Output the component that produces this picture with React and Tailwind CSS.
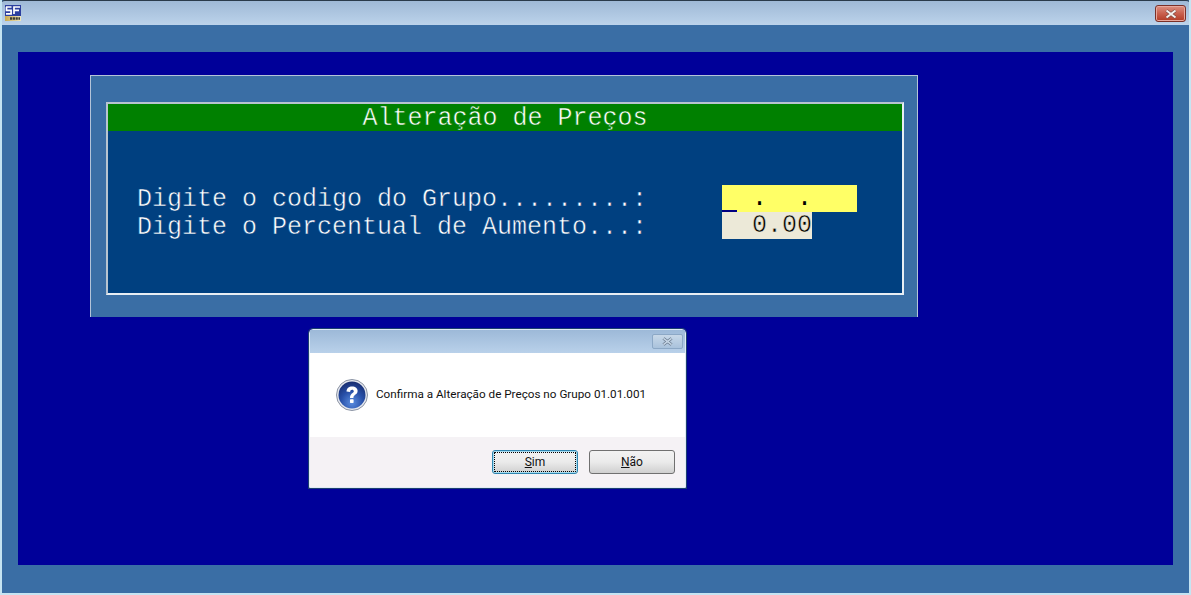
function Logo() {
  return (
    <svg width="16" height="16" viewBox="0 0 16 16" className="ml-[5px] mt-[4px]">
      <defs>
        <linearGradient id="band" x1="0" x2="1" y1="0" y2="0">
          <stop offset="0%" stopColor="#c9a94e" />
          <stop offset="100%" stopColor="#efe6bd" />
        </linearGradient>
      </defs>
      <rect x="0" y="0" width="16" height="11" fill="#2c3f9f" />
      <path d="M1 2h5.5M1.5 2v3.4h4.6v3.4H1" fill="none" stroke="#fff" strokeWidth="1.7" />
      <path d="M15 2H9v7M9 5.4h5" fill="none" stroke="#fff" strokeWidth="1.7" />
      <rect x="0" y="11" width="16" height="5" fill="url(#band)" />
      <path d="M5 13.5h10" stroke="#3c3c34" strokeWidth="2.6" strokeDasharray="2.2 .6" />
    </svg>
  )
}

function QuestionIcon() {
  return (
    <svg width="32" height="32" viewBox="0 0 32 32">
      <defs>
        <radialGradient id="ball" cx="50%" cy="78%" r="75%">
          <stop offset="0%" stopColor="#5a8de0" />
          <stop offset="55%" stopColor="#2850a8" />
          <stop offset="100%" stopColor="#182f74" />
        </radialGradient>
      </defs>
      <circle cx="16" cy="16" r="15.5" fill="#e4e7ee" stroke="#8c94a4" />
      <circle cx="16" cy="16" r="13.5" fill="url(#ball)" />
      <path d="M10.5 12.6c0-3.2 2.5-5.1 5.6-5.1 3.3 0 5.5 1.8 5.5 4.6 0 3.7-4.2 3.6-4.2 6.8h-3.4c0-4.6 3.8-4.6 3.8-6.6 0-1-.7-1.6-1.7-1.6-1.2 0-1.9.8-2 2.2z" fill="#fff" />
      <rect x="14" y="20.3" width="3.6" height="3.6" rx="0.6" fill="#fff" />
    </svg>
  )
}

function CloseGlyph({ color, edge, width, height }) {
  return (
    <svg width={width} height={height} viewBox="0 0 14 10">
      <path d="M2.5 1.5l9 7M11.5 1.5l-9 7" fill="none" stroke={edge} strokeWidth="3.4" />
      <path d="M2.5 1.5l9 7M11.5 1.5l-9 7" fill="none" stroke={color} strokeWidth="2" />
    </svg>
  )
}

function DialogButton({ hotkey, rest, active }) {
  return (
    <button
      className={`w-[86px] h-[24px] rounded-[3px] border text-[12px] text-[#111] flex items-center justify-center bg-gradient-to-b from-[#f2f2f2] via-[#ebebeb] to-[#cfcfcf] ${
        active
          ? 'border-[#2f86b0] shadow-[inset_0_0_0_1px_#a8dcf0] outline-1 outline-dotted outline-black -outline-offset-3'
          : 'border-[#707070]'
      }`}
    >
      <span className="underline">{hotkey}</span>
      {rest}
    </button>
  )
}

function Dialog() {
  return (
    <div className="absolute left-[307px] top-[329px] w-[377px] h-[159px] flex flex-col rounded-t-[4px] border border-[#dfeaf5] shadow-[0_0_0_1px_#1c3f70] font-['Roboto',sans-serif]">
      <div className="h-[23px] flex justify-end pr-[2px] pt-[4px] bg-gradient-to-b from-[#9db9d8] to-[#b9d1ea]">
        <div className="w-[31px] h-[15px] flex items-center justify-center rounded-[2px] border border-[#8ca8c6] bg-gradient-to-b from-[#c8d8e8] to-[#a9c2dc]">
          <CloseGlyph color="#c3d3e3" edge="#66768a" width={13} height={9} />
        </div>
      </div>
      <div className="flex-1 flex flex-col bg-white">
        <div className="h-[84px] flex items-center pl-[26px] gap-[8px]">
          <QuestionIcon />
          <span className="text-[11.7px] text-[#111]">Confirma a Alteração de Preços no Grupo 01.01.001</span>
        </div>
        <div className="flex-1 flex justify-end items-start gap-[11px] pr-[10px] pt-[13px] bg-[#f5f2f5]">
          <DialogButton hotkey="S" rest="im" active />
          <DialogButton hotkey="N" rest="ão" />
        </div>
      </div>
    </div>
  )
}

function App() {
  return (
    <div className="relative w-[1191px] h-[595px] flex flex-col overflow-hidden bg-[#3a6ea5] border-l-2 border-r-2 border-b-2 border-[#c5e4f2] font-['Liberation_Mono',monospace]">
      {/* barra de titulo */}
      <div className="h-[25px] -mx-[2px] flex justify-between bg-gradient-to-b from-[#9fb9d6] to-[#bcd3eb] border-t border-[#2a3a4a] rounded-t-[5px]">
        <Logo />
        <div className="mr-[5px] mt-[4px] w-[31px] h-[17px] flex items-center justify-center rounded-[3px] border border-[#7a3028] shadow-[inset_0_0_0_1px_#e8a89c] bg-gradient-to-b from-[#dc8f80] via-[#c9604e] to-[#b23a24]">
          <CloseGlyph color="#f4f0ee" edge="#7d4a42" width={14} height={10} />
        </div>
      </div>

      <div className="flex-1 mx-px px-[15px] pt-[27px] pb-[28px] flex">
        <div className="flex-1 bg-[#000099] pl-[72px] pt-[23px]">
          {/* painel */}
          <div className="w-[828px] h-[242px] bg-[#3a6ea5] border-l border-t border-r border-[#b4c4d8] pl-[15px] pt-[26px]">
            <div className="w-[798px] h-[193px] border-2 border-t-[#b8c4d0] border-l-[#b8c4d0] border-r-[#e8eef4] border-b-[#e8eef4] bg-[#004080] text-white text-[25px]">
              <div className="h-[27px] leading-[29px] bg-[#008000] text-center [-webkit-text-stroke:0.5px_#008000]">Alteração de Preços</div>
              <div className="mt-[54px] pl-[29px] flex">
                <div className="w-[585px] pt-px leading-[28px] whitespace-pre [-webkit-text-stroke:0.5px_#004080]">
                  <div>Digite o codigo do Grupo.........:</div>
                  <div>Digite o Percentual de Aumento...:</div>
                </div>
                <div className="text-black leading-[28px] whitespace-pre">
                  <div className="relative w-[135px] h-[27px] bg-[#ffff66]">
                    <span>  .  .</span>
                    <span className="absolute left-0 bottom-0 w-[15px] h-[2px] bg-[#000080]" />
                  </div>
                  <div className="w-[90px] h-[27px] bg-[#ece9d8] text-right [-webkit-text-stroke:0.5px_#ece9d8]">0.00</div>
                </div>
              </div>
            </div>
          </div>
        </div>
      </div>

      <Dialog />
    </div>
  )
}

export default App
